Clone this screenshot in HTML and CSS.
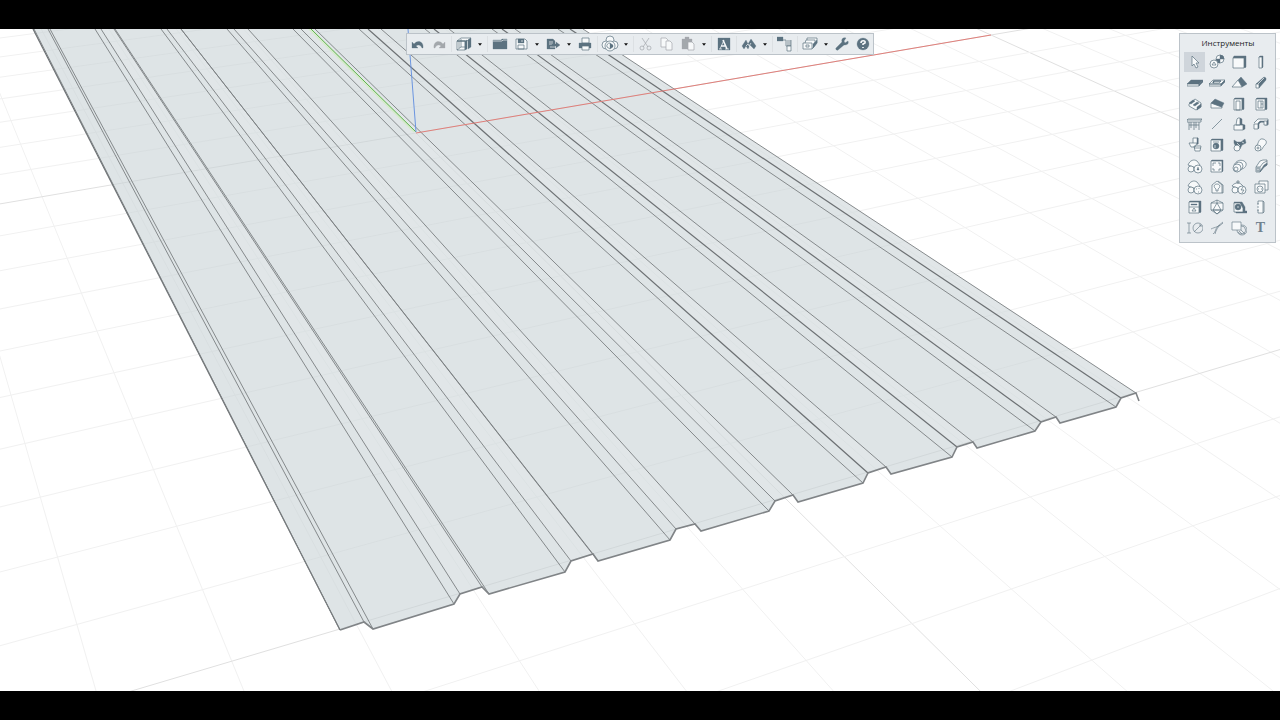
FILE: index.html
```html
<!DOCTYPE html>
<html lang="ru">
<head>
    <meta charset="UTF-8">
    <meta name="viewport" content="width=device-width, initial-scale=1.0">
    <title>Инструменты</title>
    <link rel="stylesheet" href="styles.css">
</head>
<body>
    <main class="viewport">
        <svg class="scene" viewBox="0 29 1280 662" preserveAspectRatio="xMidYMid slice">
            <g class="grid"></g>
            <path class="sheet"/>
            <g class="folds"></g>
            <path class="edge"/>
            <path class="axis-glow" d="M309 29 414 132"/>
            <path class="axis-y" d="M311 29 416 132"/>
            <path class="axis-z" d="M408 29 416 132"/>
            <path class="axis-x" d="M416 133 991 35"/>
        </svg>

        <div class="toolbar">
            <button class="tool" aria-label="Отменить"><svg viewBox="0 0 16 16"><path class="f" d="M2 6v6h6L6 10c2-2 5-1 6 2h1c1-6-5-9-9-4z"/></svg></button>
            <button class="tool off" aria-label="Повторить"><svg viewBox="0 0 16 16"><path class="f" d="M14 6v6H8l2-2c-2-2-5-1-6 2H3C2 6 8 3 12 8z"/></svg></button>
            <span class="sep"></span>
            <button class="tool" aria-label="Вид"><svg viewBox="0 0 16 16"><path class="w" d="M1 5h8v9H1zM1 5l4-3h10l-4 3z"/><path class="f" d="M9 5l2-1v9l-2 1zM12 4l3-2v9l-3 2z"/><path d="M5 3v8l-4 3M5 11h4M1 5l8 0M3 5v7"/></svg></button>
            <button class="drop" aria-label="Виды"><svg viewBox="0 0 6 4"><path d="M0 0h6L3 4z"/></svg></button>
            <span class="sep"></span>
            <button class="tool" aria-label="Открыть"><svg viewBox="0 0 16 16"><path class="f" d="M1 13V4h8l1-1h5v10z"/><path class="hi" d="M1 5h9l1-1h4"/></svg></button>
            <button class="tool" aria-label="Сохранить"><svg viewBox="0 0 16 16"><path class="w" d="M3 3h9l2 2v8H3z"/><path class="f" d="M5 3h6v4H5z"/><path d="M5 9h6v4H5z"/><path class="hi" d="M9 4v2"/></svg></button>
            <button class="drop" aria-label="Варианты сохранения"><svg viewBox="0 0 6 4"><path d="M0 0h6L3 4z"/></svg></button>
            <button class="tool" aria-label="Экспорт"><svg viewBox="0 0 16 16"><path class="f" d="M2 3h6l2 2v8H2z"/><path class="hi" d="M4 6h4M4 8h4M5 11h8"/><path class="f" d="M7 8h4V6l4 3-4 3v-2H7z"/></svg></button>
            <button class="drop" aria-label="Форматы экспорта"><svg viewBox="0 0 6 4"><path d="M0 0h6L3 4z"/></svg></button>
            <button class="tool" aria-label="Печать"><svg viewBox="0 0 16 16"><path class="w" d="M5 2h7v5H5z"/><path class="f" d="M2 7h12v5H2z"/><path class="w" d="M5 10h7v4H5z"/></svg></button>
            <span class="sep"></span>
            <button class="tool" aria-label="Стили"><svg class="large" viewBox="0 0 18 18"><circle class="w" cx="9" cy="5" r="4"/><circle class="w" cx="5" cy="10" r="4"/><circle class="w" cx="13" cy="10" r="4"/><circle class="w" cx="9" cy="11" r="5"/><path class="f" d="M9 8l3 2v2l-3 2z"/><path d="M6 12a3 3 0 0 1 3-4M6 12l3 2"/></svg></button>
            <button class="drop" aria-label="Список стилей"><svg viewBox="0 0 6 4"><path d="M0 0h6L3 4z"/></svg></button>
            <span class="sep"></span>
            <button class="tool off" aria-label="Вырезать"><svg viewBox="0 0 16 16"><path d="M4 2l6 9M11 2L5 11"/><circle cx="4" cy="12" r="2"/><circle cx="11" cy="12" r="2"/></svg></button>
            <button class="tool off" aria-label="Копировать"><svg viewBox="0 0 16 16"><path class="w" d="M2 2h5l2 2v7H2z"/><path class="w" d="M7 5h4l2 2v7H7z"/></svg></button>
            <button class="tool off" aria-label="Вставить"><svg viewBox="0 0 16 16"><path class="f" d="M2 3h10v10H2zM5 1h4v3H5z"/><path class="w" d="M8 6h4l2 2v6H8z"/></svg></button>
            <button class="drop" aria-label="Варианты вставки"><svg viewBox="0 0 6 4"><path d="M0 0h6L3 4z"/></svg></button>
            <span class="sep"></span>
            <button class="tool" aria-label="Надписи"><svg viewBox="0 0 16 16"><path class="f" d="M2 2h12v12H2z"/><path class="hi" d="M3 13h3M9 13h4M4 13l4-9"/><path class="hi bold" d="M7 4l4 9M5 10h4"/></svg></button>
            <span class="sep"></span>
            <button class="tool" aria-label="Модели"><svg viewBox="0 0 16 16"><path class="f" d="M1 10l4-6 2 4 3-5 5 7-2 3-4-4-2 4-2-3-2 3z"/><path class="hi" d="M7 8l2 3M5 10l2-2M10 7l-2 3"/></svg></button>
            <button class="drop" aria-label="Список моделей"><svg viewBox="0 0 6 4"><path d="M0 0h6L3 4z"/></svg></button>
            <span class="sep"></span>
            <button class="tool" aria-label="Структура"><svg viewBox="0 0 16 16"><path class="f" d="M0 1h6v4H0z"/><path d="M6 4h3M9 4v6h5V4M11 4v6M13 4v6"/><path class="w" d="M10 10h4v5h-4z"/></svg></button>
            <span class="sep"></span>
            <button class="tool" aria-label="Слои"><svg viewBox="0 0 16 16"><path class="w" d="M5 6V2h10v5l-4 5"/><path class="w" d="M3 7l1-3h9v5l-3 4"/><path class="w" d="M1 7h9v6H1z"/><path class="f" d="M11 8l4-4v3l-4 5z"/><path d="M4 9h3v2H4z"/></svg></button>
            <button class="drop" aria-label="Список слоёв"><svg viewBox="0 0 6 4"><path d="M0 0h6L3 4z"/></svg></button>
            <button class="tool" aria-label="Настройки"><svg viewBox="0 0 16 16"><path class="f" d="M2 12l6-6c-1-3 1-5 4-4l-2 3 1 2 3-2c1 3-1 4-4 4l-6 5c-1 1-3-1-2-2z"/></svg></button>
            <button class="tool" aria-label="Справка"><svg viewBox="0 0 16 16"><circle class="f" cx="8" cy="8" r="6"/><path class="hi bold" d="M6 7c0-3 5-3 4 0L8 8v1M8 11v1"/></svg></button>
        </div>

        <section class="panel">
            <h1 class="title">Инструменты</h1>
            <div class="tools">
                <button class="tool active" aria-label="Выбор"><svg viewBox="0 0 16 16"><path class="w" d="M5 2v10l2-2 2 4 2-1-2-4h3z"/></svg></button>
                <button class="tool" aria-label="Сборка"><svg viewBox="0 0 16 16"><circle class="w" cx="11" cy="5" r="4"/><path class="f" d="M11 1a4 4 0 0 1 4 4h-4z"/><path class="f" d="M11 5v4a4 4 0 0 1-4-4z"/><circle class="w" cx="5" cy="10" r="4"/><path d="M5 8l2 3H3z"/></svg></button>
                <button class="tool" aria-label="Стена"><svg viewBox="0 0 16 16"><path class="f" d="M2 4l1-2h12v11l-1 1z"/><path class="w" d="M2 4h11v10H2z"/></svg></button>
                <button class="tool" aria-label="Колонна"><svg viewBox="0 0 16 16"><path class="f" d="M6 3l1-1h3v11l-1 1z"/><path class="w" d="M6 3h3v11H6z"/></svg></button>
                <button class="tool" aria-label="Перекрытие"><svg viewBox="0 0 16 16"><path class="f" d="M0 9l4-4h12l-4 4z"/><path class="w" d="M0 9h12v2H0z"/><path class="f" d="M12 9l4-4v2l-4 4z"/></svg></button>
                <button class="tool" aria-label="Проём"><svg viewBox="0 0 16 16"><path class="w" d="M0 9l4-4h12l-4 4zM0 9h12v2H0z"/><path class="f" d="M12 9l4-4v2l-4 4z"/><path class="bold" d="M4 8l1-2h7"/><path d="M4 8h6l2-2"/></svg></button>
                <button class="tool" aria-label="Крыша"><svg viewBox="0 0 16 16"><path class="f" d="M7 5l3-3 6 7-5 3z"/><path class="w" d="M1 12l6-7 4 7z"/></svg></button>
                <button class="tool" aria-label="Балка"><svg viewBox="0 0 16 16"><path class="f" d="M3 9l8-7 2 1v2l-7 8z"/><path class="w" d="M3 9h3v4H3z"/><path class="hi" d="M5 9l6-6"/></svg></button>
                <button class="tool" aria-label="Лестница"><svg viewBox="0 0 16 16"><path class="w" d="M2 8v2l7 4 5-3V7l-6-4z"/><path class="f" d="M2 7l4-3 2 1-4 3zM6 9l4-3 2 1-4 3zM10 11l4-3v3l-4 3z"/></svg></button>
                <button class="tool" aria-label="Пандус"><svg viewBox="0 0 16 16"><path class="w" d="M2 7v5h11v-1z"/><path class="f" d="M2 7l4-4 9 4-2 4z"/></svg></button>
                <button class="tool" aria-label="Дверь"><svg viewBox="0 0 16 16"><path class="f" d="M3 3l1-1h9v11l-1 1z"/><path class="w" d="M3 3h8v11H3z"/><path d="M5 5h4v9H5z"/></svg></button>
                <button class="tool" aria-label="Окно"><svg viewBox="0 0 16 16"><path class="f" d="M3 3l1-1h10v11l-1 1z"/><path class="w" d="M3 3h9v11H3z"/><path d="M5 5h5v7H5zM8 5v7M8 8h2"/></svg></button>
                <button class="tool" aria-label="Ограждение"><svg viewBox="0 0 16 16"><path class="w" d="M0 4h14v2H0zM0 4l1-1h14l-1 1"/><path d="M2 6v8M4 6v6M7 6v8M9 6v6M12 6v8M2 9h10"/></svg></button>
                <button class="tool" aria-label="Линия"><svg viewBox="0 0 16 16"><path d="M3 13L13 3"/></svg></button>
                <button class="tool" aria-label="Фундамент"><svg viewBox="0 0 16 16"><path class="f" d="M9 2l2 1v5l3 1v4l-2 1V9H9z"/><path class="w" d="M5 9l1-6 1-1h2v7zM3 9h9v5H3z"/></svg></button>
                <button class="tool" aria-label="Ленточный фундамент"><svg viewBox="0 0 16 16"><path class="w" d="M1 7l4-4h10v6h-3V6H7l-3 3"/><path class="f" d="M5 7l2-2h4v1H8l-2 2v4l-1 1z"/><path class="w" d="M1 8h4v5H1zM11 5h3v4h-3z"/><path class="f" d="M14 5l1-1v4l-1 1z"/></svg></button>
                <button class="tool" aria-label="Сантехника"><svg viewBox="0 0 16 16"><path class="w" d="M6 1h5v6H6z"/><path class="f" d="M10 1h1v6h-1z"/><path class="w" d="M2 6h8l-2 4H4zM7 9h7l-1 5H8zM7 11h7"/></svg></button>
                <button class="tool" aria-label="Оборудование"><svg viewBox="0 0 16 16"><path class="f" d="M2 3l1-1h11v11l-1 1z"/><path class="w" d="M2 3h10v11H2z"/><path d="M4 5h6"/><circle class="f" cx="7" cy="9" r="3"/><path class="hi" d="M6 8v3"/></svg></button>
                <button class="tool" aria-label="Деталь трубы"><svg viewBox="0 0 16 16"><path class="f" d="M3 3l3 2h4l4-3 1 4-4 2-2 4-4-2-2-4z"/><circle class="w" cx="6" cy="11" r="3"/><path class="hi" d="M6 6l3 3M11 5l2 1"/></svg></button>
                <button class="tool" aria-label="Труба"><svg viewBox="0 0 16 16"><path class="w" d="M3 9c3-2 2-8 7-7 4 1 4 4 2 6-3 2-2 6-6 5"/><circle class="w" cx="5" cy="11" r="3"/><circle cx="5" cy="11" r="1"/></svg></button>
                <button class="tool" aria-label="Система водоснабжения"><svg viewBox="0 0 16 16"><path class="w" d="M1 7c2-5 6-6 9-4l3 4-4 3z"/><circle class="w" cx="4" cy="11" r="3"/><circle class="w" cx="11" cy="11" r="4"/><path class="f" d="M11 9l1 3h-2z"/></svg></button>
                <button class="tool" aria-label="Вентиляция"><svg viewBox="0 0 16 16"><path class="f" d="M2 3l1-1h11v11l-1 1z"/><path class="w" d="M2 3h11v11H2z"/><path d="M7 5H4v3M9 5h2v3M4 10v2h2M11 10v2H9"/></svg></button>
                <button class="tool" aria-label="Деталь воздуховода"><svg viewBox="0 0 16 16"><path class="w" d="M3 7c2-4 6-6 10-4s2 7-2 8l-5 3"/><circle class="w" cx="8" cy="8" r="4"/><circle class="w" cx="6" cy="10" r="4"/><circle cx="5" cy="11" r="2"/></svg></button>
                <button class="tool" aria-label="Воздуховод"><svg viewBox="0 0 16 16"><path class="w" d="M3 9l4-6 3-1h4v5l-3 2-4 5H3z"/><path d="M3 9h4v5M7 9l3-4 4-2"/><path class="f" d="M7 13l4-6 3-2v2l-3 2-4 5z"/><path d="M4 10h2v3H4z"/></svg></button>
                <button class="tool" aria-label="Система вентиляции"><svg viewBox="0 0 16 16"><path class="w" d="M1 7c2-5 6-6 9-4l3 4-4 3z"/><circle class="w" cx="4" cy="11" r="3"/><circle class="w" cx="11" cy="11" r="4"/><path d="M9 10h1M12 9v1M11 13h1"/></svg></button>
                <button class="tool" aria-label="Светильник"><svg viewBox="0 0 16 16"><path class="w" d="M3 6l5-4 5 4v8H3z"/><path d="M9 2l5 4v8h-1M7 12v-2c-3-2-2-5 1-5s4 3 1 5v2z"/></svg></button>
                <button class="tool" aria-label="Электрическая система"><svg viewBox="0 0 16 16"><path class="w" d="M1 7c2-3 6-4 9-2l3 3-4 2z"/><path d="M7 1v4M5 3h4"/><circle class="w" cx="4" cy="11" r="3"/><circle class="w" cx="11" cy="11" r="4"/><path d="M12 8l-2 3h3l-2 3"/></svg></button>
                <button class="tool" aria-label="Розетка"><svg viewBox="0 0 16 16"><path class="w" d="M6 2h9v9H6z"/><path class="w" d="M2 5h10v9H2z"/><circle cx="7" cy="10" r="3"/><path d="M5 10h1M8 10h1"/></svg></button>
                <button class="tool" aria-label="Электрощит"><svg viewBox="0 0 16 16"><path class="f" d="M2 3l1-1h11v11l-1 1z"/><path class="w" d="M2 3h10v11H2z"/><path class="f" d="M4 5h6v1H4z"/><path d="M2 8h10M7 9l2 3H5z"/></svg></button>
                <button class="tool" aria-label="Объект"><svg viewBox="0 0 16 16"><path class="w" d="M8 1l6 3v7l-6 4-6-4V4z"/><path d="M8 4l4 7H4zM8 1v3L2 4M8 4h6M2 11h12M4 11l4 4 4-4"/></svg></button>
                <button class="tool" aria-label="Рулетка"><svg viewBox="0 0 16 16"><path class="f" d="M3 3h8l3 5v4h2v2H5z"/><path class="w" d="M3 4h6l3 5v4H3z"/><circle class="f" cx="7" cy="8" r="3"/><path class="hi" d="M7 7v2"/></svg></button>
                <button class="tool" aria-label="Разрез"><svg viewBox="0 0 16 16"><path class="w" d="M5 2h5v12H5v-3M5 2v3M5 7v2"/><path d="M4 5h2M4 11h2M10 2l1 1v10l-1 1"/></svg></button>
                <button class="tool thin" aria-label="Размер"><svg viewBox="0 0 16 16"><path d="M0 3h4M0 13h4M2 3v10M7 12l7-7M12 5h2v2"/><circle cx="11" cy="8" r="5"/></svg></button>
                <button class="tool thin" aria-label="Сплайн"><svg viewBox="0 0 16 16"><path d="M2 9c4-2 8-2 12-6M4 14c3-2 2-5 5-8l5-4M6 14c1-4 3-7 5-9"/></svg></button>
                <button class="tool thin" aria-label="Штриховка"><svg viewBox="0 0 16 16"><circle cx="11" cy="10" r="5"/><path d="M8 11l3 3M9 9l5 5"/><path class="w" d="M1 2h9v8H1z"/><path d="M10 6a4 4 0 1 1-3 6"/></svg></button>
                <button class="tool thin letter" aria-label="Текст">T</button>
            </div>
        </section>
    </main>
    <script src="scene.js"></script>
</body>
</html>
```
FILE: styles.css
```css
html, body{
    height: 100%;
    margin: 0;
}
body{
    box-sizing: border-box;
    padding: 29px 0;
    background: #000;
    font-family: "Open Sans", "Noto Sans", sans-serif;
}
.viewport{
    position: relative;
    height: 100%;
    background: #fff;
    overflow: hidden;
}

/* model view */
.scene{
    display: block;
    width: 100%;
    height: 100%;
    fill: none;
}
.grid line{
    stroke: #f1f1f1;
}
.grid .major{
    stroke: #e0e0e0;
}
.sheet{
    fill: #c8d2d6;
    fill-opacity: 0.6;
}
.folds path{
    stroke: #7b7f81;
    stroke-width: 0.9;
}
.folds .dark{
    stroke: #6c7073;
    stroke-width: 1.2;
}
.folds .rib{
    fill: #fff;
    fill-opacity: 0.1;
    stroke: none;
}
.edge{
    stroke: #808487;
    stroke-width: 1.6;
}
.axis-glow{
    stroke: #d6ecca;
    stroke-width: 1.5;
}
.axis-x{
    stroke: #e07f7a;
}
.axis-y{
    stroke: #5cb843;
}
.axis-z{
    stroke: #6b95e0;
}

/* floating bars */
.toolbar, .panel{
    position: absolute;
    top: 4px;
    background: #e8ecef;
    border: 1px solid #bcc3c9;
}
.toolbar{
    left: 406px;
    display: flex;
    align-items: center;
    height: 20px;
}
.panel{
    right: 4px;
    padding: 0 3px 3px 4px;
}
.title{
    margin: 0;
    font-size: 8px;
    line-height: 18px;
    font-weight: normal;
    text-align: center;
    color: #222;
}
.tools{
    display: grid;
    grid-template-columns: repeat(4, 22px);
    grid-auto-rows: 1fr;
    height: 187px;
}
button{
    display: flex;
    align-items: center;
    justify-content: center;
    padding: 0;
    border: 0;
    background: none;
    cursor: pointer;
}
.tool{
    width: 21px;
    height: 20px;
    color: #5c7280;
}
.tool:hover, .drop:hover{
    background: #d9dfe4;
}
.tool.active{
    background: #cfd5db;
}
.tool.off{
    color: #a3a8ac;
}
.tool.thin{
    color: #6f818d;
}
.tool svg{
    width: 16px;
    height: 16px;
    fill: none;
    stroke: currentColor;
    stroke-width: 0.7;
}
.tool .large{
    width: 18px;
    height: 18px;
}
.tool .f{
    fill: currentColor;
}
.toolbar .f{
    stroke-width: 0.3;
}
.panel .f{
    stroke-width: 0.4;
}
.tool .w{
    fill: #f7f9fa;
}
.tool .hi{
    stroke: #f7f9fa;
}
.tool .bold{
    stroke-width: 1.6;
}
.letter{
    font-family: "Liberation Serif", serif;
    font-size: 14px;
    font-weight: bold;
}
.drop{
    width: 11px;
    height: 20px;
}
.drop svg{
    width: 4px;
    height: 3px;
    fill: #111;
}
.sep{
    width: 1px;
    height: 16px;
    margin: 0 1px 0 2px;
    background: #dce0e3;
}
```
FILE: scene.js
```js
const NS = 'http://www.w3.org/2000/svg';

const add = (parent, tag, attrs)=>{
    const $el = document.createElementNS(NS, tag);
    Object.keys(attrs).forEach(k=>$el.setAttribute(k, attrs[k]));
    parent.appendChild($el);
}

// screen corners of the 10x10 ground square: origin, +x, +x-y, -y
const corners = [[416, 133], [991, 35], [1524, 277], [784, 497]];

const createProjection = ([p0, p1, p2, p3])=>{
    const dx1 = p1[0] - p2[0], dx2 = p3[0] - p2[0], sx = p0[0] - p1[0] + p2[0] - p3[0];
    const dy1 = p1[1] - p2[1], dy2 = p3[1] - p2[1], sy = p0[1] - p1[1] + p2[1] - p3[1];
    const det = dx1 * dy2 - dx2 * dy1;
    const g = (sx * dy2 - dx2 * sy) / det;
    const h = (dx1 * sy - sx * dy1) / det;
    return (x, y)=>{
        const u = x / 10, v = y / 10, w = g * u + h * v + 1;
        return [0, 1].map(i=>
            ((p1[i] - p0[i] + g * p1[i]) * u + (p3[i] - p0[i] + h * p3[i]) * v + p0[i]) / w
        );
    }
}

const project = createProjection(corners);
const $grid = document.querySelector('.grid');

const gridLine = (a, b, n)=>{
    const [x1, y1] = project(...a);
    const [x2, y2] = project(...b);
    add($grid, 'line', {x1, y1, x2, y2, class: n % 10 ? 'minor' : 'major'});
}

for(let x = -12;x<=40;x++){
    gridLine([x, -20], [x, 17], x);
}
for(let y = -20;y<=17;y++){
    gridLine([-12, y], [40, y], y);
}

// front edge of the profiled sheet
const profile = [
    [340, 630], [364, 622], [373, 629], [454, 604], [460, 594], [482, 587],
    [489, 594], [565, 572], [571, 561], [593, 554],
    [598, 561], [670, 540], [676, 529], [695, 524],
    [701, 531], [769, 511], [775, 501], [793, 495],
    [798, 502], [863, 483], [868, 473], [886, 467],
    [891, 474], [952, 457], [957, 447], [973, 442],
    [977, 448], [1035, 431], [1041, 422], [1056, 417],
    [1060, 423], [1116, 407], [1121, 398], [1136, 393]
];

const points = profile.map(p=>p.join(' ')).join(' ');
document.querySelector('.sheet').setAttribute('d', `M33 29 ${points} 583 29z`);
document.querySelector('.edge').setAttribute('d', `M${points} 1139 401`);

// fold lines: index in the profile, x where the line leaves the view at the top
const folds = [
    [0, 33, 1], [0, 34], [1, 48], [2, 50],
    [3, 95], [4, 101], [5, 114], [6, 115],
    [7, 161], [8, 167], [9, 181], [10, 181],
    [11, 227], [12, 234], [13, 248],
    [15, 293], [16, 301], [17, 315],
    [19, 359], [20, 368, 1], [21, 381],
    [23, 425], [24, 434, 1], [25, 449],
    [27, 492], [28, 502, 1], [29, 515],
    [31, 558], [32, 570, 1], [33, 583]
];
const $folds = document.querySelector('.folds');

const ribs = [[4, 101, 5, 114], [8, 167, 9, 181], [12, 234, 13, 248], [16, 301, 17, 315],
    [20, 368, 21, 381], [24, 434, 25, 449], [28, 502, 29, 515], [32, 570, 33, 583]];
ribs.forEach(([a, ax, b, bx])=>{
    add($folds, 'path', {class: 'rib', d: `M${ax} 29 ${profile[a].join(' ')} ${profile[b].join(' ')} ${bx} 29z`});
});
folds.forEach(([i, top, dark])=>{
    add($folds, 'path', {class: dark ? 'dark' : 'fold', d: `M${profile[i].join(' ')} ${top} 29`});
});
```
